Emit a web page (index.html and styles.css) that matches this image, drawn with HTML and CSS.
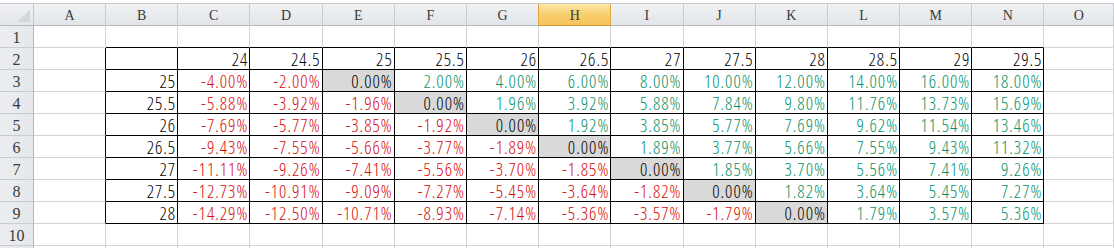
FILE: index.html
```html
<!DOCTYPE html>
<html>
<head>
<meta charset="utf-8">
<link rel="stylesheet" href="styles.css">
</head>
<body>
<div class="sheet">
  <div class="topbar"></div>
  <div class="grid">
    <div class="corner"></div>
    <div class="ch">A</div><div class="ch">B</div><div class="ch">C</div><div class="ch">D</div><div class="ch">E</div><div class="ch">F</div><div class="ch presel">G</div><div class="ch sel">H</div><div class="ch">I</div><div class="ch">J</div><div class="ch">K</div><div class="ch">L</div><div class="ch">M</div><div class="ch">N</div><div class="ch">O</div>

    <div class="rh">1</div><div class="c"></div>
    <div class="c tt"></div><div class="c tt"></div><div class="c tt"></div><div class="c tt"></div><div class="c tt"></div><div class="c tt"></div><div class="c tt"></div><div class="c tt"></div><div class="c tt"></div><div class="c tt"></div><div class="c tt"></div><div class="c tt"></div><div class="c tt"></div>
    <div class="c"></div>

    <div class="rh">2</div><div class="c tl"></div>
    <div class="c t n"></div><div class="c t n">24</div><div class="c t n">24.5</div><div class="c t n">25</div><div class="c t n">25.5</div><div class="c t n">26</div><div class="c t n">26.5</div><div class="c t n">27</div><div class="c t n">27.5</div><div class="c t n">28</div><div class="c t n">28.5</div><div class="c t n">29</div><div class="c t n">29.5</div>
    <div class="c"></div>

    <div class="rh">3</div><div class="c tl"></div>
    <div class="c t n">25</div><div class="c t n neg">-4.00%</div><div class="c t n neg">-2.00%</div><div class="c t n zero">0.00%</div><div class="c t n pos">2.00%</div><div class="c t n pos">4.00%</div><div class="c t n pos">6.00%</div><div class="c t n pos">8.00%</div><div class="c t n pos">10.00%</div><div class="c t n pos">12.00%</div><div class="c t n pos">14.00%</div><div class="c t n pos">16.00%</div><div class="c t n pos">18.00%</div>
    <div class="c"></div>

    <div class="rh">4</div><div class="c tl"></div>
    <div class="c t n">25.5</div><div class="c t n neg">-5.88%</div><div class="c t n neg">-3.92%</div><div class="c t n neg">-1.96%</div><div class="c t n zero">0.00%</div><div class="c t n pos">1.96%</div><div class="c t n pos">3.92%</div><div class="c t n pos">5.88%</div><div class="c t n pos">7.84%</div><div class="c t n pos">9.80%</div><div class="c t n pos">11.76%</div><div class="c t n pos">13.73%</div><div class="c t n pos">15.69%</div>
    <div class="c"></div>

    <div class="rh">5</div><div class="c tl"></div>
    <div class="c t n">26</div><div class="c t n neg">-7.69%</div><div class="c t n neg">-5.77%</div><div class="c t n neg">-3.85%</div><div class="c t n neg">-1.92%</div><div class="c t n zero">0.00%</div><div class="c t n pos">1.92%</div><div class="c t n pos">3.85%</div><div class="c t n pos">5.77%</div><div class="c t n pos">7.69%</div><div class="c t n pos">9.62%</div><div class="c t n pos">11.54%</div><div class="c t n pos">13.46%</div>
    <div class="c"></div>

    <div class="rh">6</div><div class="c tl"></div>
    <div class="c t n">26.5</div><div class="c t n neg">-9.43%</div><div class="c t n neg">-7.55%</div><div class="c t n neg">-5.66%</div><div class="c t n neg">-3.77%</div><div class="c t n neg">-1.89%</div><div class="c t n zero">0.00%</div><div class="c t n pos">1.89%</div><div class="c t n pos">3.77%</div><div class="c t n pos">5.66%</div><div class="c t n pos">7.55%</div><div class="c t n pos">9.43%</div><div class="c t n pos">11.32%</div>
    <div class="c"></div>

    <div class="rh">7</div><div class="c tl"></div>
    <div class="c t n">27</div><div class="c t n neg">-11.11%</div><div class="c t n neg">-9.26%</div><div class="c t n neg">-7.41%</div><div class="c t n neg">-5.56%</div><div class="c t n neg">-3.70%</div><div class="c t n neg">-1.85%</div><div class="c t n zero">0.00%</div><div class="c t n pos">1.85%</div><div class="c t n pos">3.70%</div><div class="c t n pos">5.56%</div><div class="c t n pos">7.41%</div><div class="c t n pos">9.26%</div>
    <div class="c"></div>

    <div class="rh">8</div><div class="c tl"></div>
    <div class="c t n">27.5</div><div class="c t n neg">-12.73%</div><div class="c t n neg">-10.91%</div><div class="c t n neg">-9.09%</div><div class="c t n neg">-7.27%</div><div class="c t n neg">-5.45%</div><div class="c t n neg">-3.64%</div><div class="c t n neg">-1.82%</div><div class="c t n zero">0.00%</div><div class="c t n pos">1.82%</div><div class="c t n pos">3.64%</div><div class="c t n pos">5.45%</div><div class="c t n pos">7.27%</div>
    <div class="c"></div>

    <div class="rh">9</div><div class="c tl"></div>
    <div class="c t n">28</div><div class="c t n neg">-14.29%</div><div class="c t n neg">-12.50%</div><div class="c t n neg">-10.71%</div><div class="c t n neg">-8.93%</div><div class="c t n neg">-7.14%</div><div class="c t n neg">-5.36%</div><div class="c t n neg">-3.57%</div><div class="c t n neg">-1.79%</div><div class="c t n zero">0.00%</div><div class="c t n pos">1.79%</div><div class="c t n pos">3.57%</div><div class="c t n pos">5.36%</div>
    <div class="c"></div>

    <div class="rh">10</div>
    <div class="c"></div><div class="c"></div><div class="c"></div><div class="c"></div><div class="c"></div><div class="c"></div><div class="c"></div><div class="c"></div><div class="c"></div><div class="c"></div><div class="c"></div><div class="c"></div><div class="c"></div><div class="c"></div><div class="c"></div>

    <div class="rh"></div>
    <div class="c"></div><div class="c"></div><div class="c"></div><div class="c"></div><div class="c"></div><div class="c"></div><div class="c"></div><div class="c"></div><div class="c"></div><div class="c"></div><div class="c"></div><div class="c"></div><div class="c"></div><div class="c"></div><div class="c"></div>
  </div>
</div>
</body>
</html>
```

FILE: styles.css
```css
html, body {
  margin: 0;
  padding: 0;
  background: #ffffff;
}

.sheet {
  width: 1114px;
  height: 248px;
  overflow: hidden;
}

.topbar {
  height: 3px;
  background: #ffffff;
  border-bottom: 1px solid #c8cbcf;
}

.grid {
  display: grid;
  grid-template-columns: 34px 72px repeat(13, 72.2px) 1fr;
  grid-auto-rows: 22px;
}

.grid > div {
  box-sizing: border-box;
  border-right: 1px solid #d4d4d4;
  border-bottom: 1px solid #d4d4d4;
  white-space: nowrap;
}

.corner {
  background:
    linear-gradient(to bottom right, transparent 50%, #d3d6da 50%) no-repeat right 3px bottom 3px / 13px 13px,
    linear-gradient(#eff1f3, #e3e6ea);
  border-right-color: #c2c6cb !important;
  border-bottom-color: #b4b9bf !important;
}

.ch {
  background: linear-gradient(#f0f2f4, #e2e5e9);
  border-right-color: #c9cdd2 !important;
  border-bottom-color: #b4b9bf !important;
  font-family: "Liberation Serif", serif;
  font-size: 14px;
  line-height: 19px;
  padding-top: 2px;
  text-align: center;
  color: #3a3a3a;
}

.ch.presel {
  border-right-color: #e2a43f !important;
}

.ch.sel {
  background: linear-gradient(#fbe6a6, #f7cd6a 55%, #f5c45a);
  border-right-color: #e2a43f !important;
  border-bottom-color: #d69a33 !important;
}

.rh {
  background: linear-gradient(to right, #eceef1, #e4e7eb);
  border-right-color: #b4b9bf !important;
  border-bottom-color: #c9cdd2 !important;
  font-family: "Liberation Serif", serif;
  font-size: 16px;
  line-height: 19px;
  padding-top: 2px;
  text-align: center;
  color: #3a3a3a;
}

.n {
  display: flex;
  justify-content: flex-end;
  align-items: flex-end;
  padding-right: 1px;
  font-family: "Open Sans", "Liberation Sans", sans-serif;
  font-stretch: 75%;
  font-weight: 300;
  font-size: 18px;
  letter-spacing: 1px;
  line-height: 20px;
  color: #000000;
}

.t {
  border-right-color: #000000 !important;
  border-bottom-color: #000000 !important;
}

.tt {
  border-bottom-color: #000000 !important;
}

.tl {
  border-right-color: #000000 !important;
}

.neg {
  color: #d80c0c;
}

.pos {
  color: #06926a;
}

.zero {
  background: #d9d9d9;
  color: #000000;
}
```
